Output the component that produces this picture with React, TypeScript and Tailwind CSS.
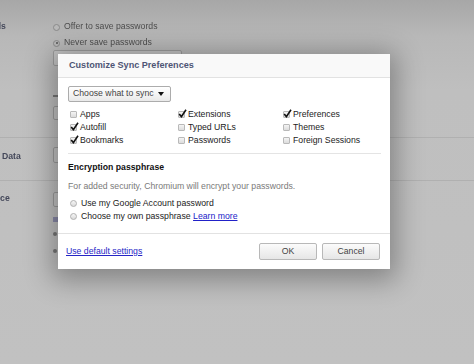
import React from "react";

const font = { fontFamily: '"Liberation Sans", Arial, sans-serif' };

function Check({ checked }: { checked?: boolean }) {
  return (
    <span className="relative ml-[2px] mr-[3px] inline-block h-[7px] w-[7px] shrink-0 rounded-[1px] border border-[#b9b9b9] bg-[linear-gradient(#f4f4f4,#dcdcdc)]">
      {checked && (
        <svg className="absolute left-[-1px] top-[-3px]" width="9" height="9" viewBox="0 0 9 9">
          <path d="M1.2 5 L3.4 7.6 L8 0.8" stroke="#111" strokeWidth="1.6" fill="none" />
        </svg>
      )}
    </span>
  );
}

function Radio() {
  return (
    <span className="ml-[2px] mr-[4px] inline-block h-[7px] w-[7px] shrink-0 rounded-full border border-[#b0b0b0] bg-[linear-gradient(#f6f6f6,#dadada)]" />
  );
}

function Item({ label, checked }: { label: string; checked?: boolean }) {
  return (
    <div className="flex h-[13px] items-center">
      <Check checked={checked} />
      <span>{label}</span>
    </div>
  );
}

function BgRadio({ label, dot }: { label: string; dot?: boolean }) {
  return (
    <div className="flex h-[16px] items-center gap-[4px]">
      <span className="relative inline-block h-[7px] w-[7px] rounded-full border border-[#8a8a8a] bg-[#b9b9b9]">
        {dot && <span className="absolute left-[1.5px] top-[1.5px] h-[2px] w-[2px] rounded-full bg-[#555]" />}
      </span>
      <span>{label}</span>
    </div>
  );
}

export default function App() {
  return (
    <div
      className="relative h-[364px] w-[474px] overflow-hidden bg-[linear-gradient(180deg,#a7a7a7_0%,#b8b8b8_10%,#bfbfbf_25%,#c1c1c1_100%)] text-[8.7px]"
      style={font}
    >
      {/* faded settings page behind */}
      <div className="-ml-[40px] flex flex-col pt-[19px] text-[#4d4d4d] blur-[0.3px]">
        <div className="flex h-[66px]">
          <div className="w-[93px] pt-[1px] font-bold text-[#44485a]">Passwords</div>
          <div className="flex flex-col">
            <BgRadio label="Offer to save passwords" />
            <BgRadio label="Never save passwords" dot />
            <div className="mt-[-1px] h-[16px] w-[129px] rounded-[2px] border border-[#9c9c9c] bg-[#c4c4c4]" />
          </div>
        </div>
        <div className="flex h-[52px]">
          <div className="w-[93px]" />
          <div className="flex flex-col pt-[10px]">
            <div className="h-[2px] w-[5px] bg-[#777]" />
            <div className="mt-[9px] h-[14px] w-[110px] rounded-[2px] border border-[#9c9c9c] bg-[#c4c4c4]" />
          </div>
        </div>
        <div className="flex h-[43px] border-t border-[#b0b0b0]">
          <div className="w-[93px] pt-[12px] font-bold text-[#44485a]">Browsing Data</div>
          <div className="pt-[9px]">
            <div className="h-[16px] w-[110px] rounded-[2px] border border-[#9c9c9c] bg-[#c4c4c4]" />
          </div>
        </div>
        <div className="flex border-t border-[#b0b0b0]">
          <div className="w-[93px] pt-[11px] font-bold text-[#44485a]">Appearance</div>
          <div className="flex flex-col pt-[11px]">
            <div className="h-[15px] w-[110px] rounded-[2px] border border-[#9c9c9c] bg-[#c4c4c4]" />
            <div className="mt-[10px] h-[5px] w-[5px] bg-[#8a8aa8]" />
            <div className="mt-[10px] h-[4px] w-[4px] rounded-full bg-[#777]" />
            <div className="mt-[13px] h-[4px] w-[4px] rounded-full bg-[#777]" />
          </div>
        </div>
      </div>

      {/* dialog */}
      <div className="absolute left-[58px] top-[54px] flex h-[215px] w-[332px] flex-col bg-white text-[#222] shadow-[0_5px_26px_6px_rgba(0,0,0,0.32)]">
        <div className="flex h-[24px] items-center border-b border-[#e2e2e2] bg-[#f9f9f9] pl-[11px] pt-[1px] text-[9.1px] font-bold text-[#4e5575]">
          Customize Sync Preferences
        </div>
        <div className="flex flex-1 flex-col px-[10px] pt-[8px]">
          <div className="flex h-[16px] w-[103px] items-center justify-between rounded-[2px] border border-[#acacac] bg-[linear-gradient(#ffffff,#e9e9e9)] pl-[4px] pr-[6px] text-[#444]">
            <span>Choose what to sync</span>
            <svg width="6" height="4" viewBox="0 0 6 4">
              <path d="M0 0 H6 L3 4 Z" fill="#111" />
            </svg>
          </div>
          <div className="mt-[6px] grid grid-cols-[108px_105px_1fr]">
            <Item label="Apps" />
            <Item label="Extensions" checked />
            <Item label="Preferences" checked />
            <Item label="Autofill" checked />
            <Item label="Typed URLs" />
            <Item label="Themes" />
            <Item label="Bookmarks" checked />
            <Item label="Passwords" />
            <Item label="Foreign Sessions" />
          </div>
          <div className="mt-[6px] h-px w-[313px] bg-[#e4e4e4]" />
          <div className="mt-[7px] font-bold text-[#111]">Encryption passphrase</div>
          <div className="mt-[6px] text-[#7a7a7a]">For added security, Chromium will encrypt your passwords.</div>
          <div className="mt-[4px] flex h-[13px] items-center">
            <Radio />
            <span>Use my Google Account password</span>
          </div>
          <div className="flex h-[13px] items-center">
            <Radio />
            <span>
              Choose my own passphrase{" "}
              <span className="text-[#2121c8] underline">Learn more</span>
            </span>
          </div>
        </div>
        <div className="flex h-[36px] items-center justify-between border-t border-[#e2e2e2] pl-[8px] pr-[10px]">
          <span className="text-[#2525c6] underline">Use default settings</span>
          <div className="flex gap-[5px]">
            <div className="flex h-[17px] w-[58px] items-center justify-center rounded-[2px] border border-[#b8b8b8] bg-[linear-gradient(#fbfbfb,#e6e6e6)] text-[#444]">
              OK
            </div>
            <div className="flex h-[17px] w-[58px] items-center justify-center rounded-[2px] border border-[#b8b8b8] bg-[linear-gradient(#fbfbfb,#e6e6e6)] text-[#444]">
              Cancel
            </div>
          </div>
        </div>
      </div>
    </div>
  );
}
